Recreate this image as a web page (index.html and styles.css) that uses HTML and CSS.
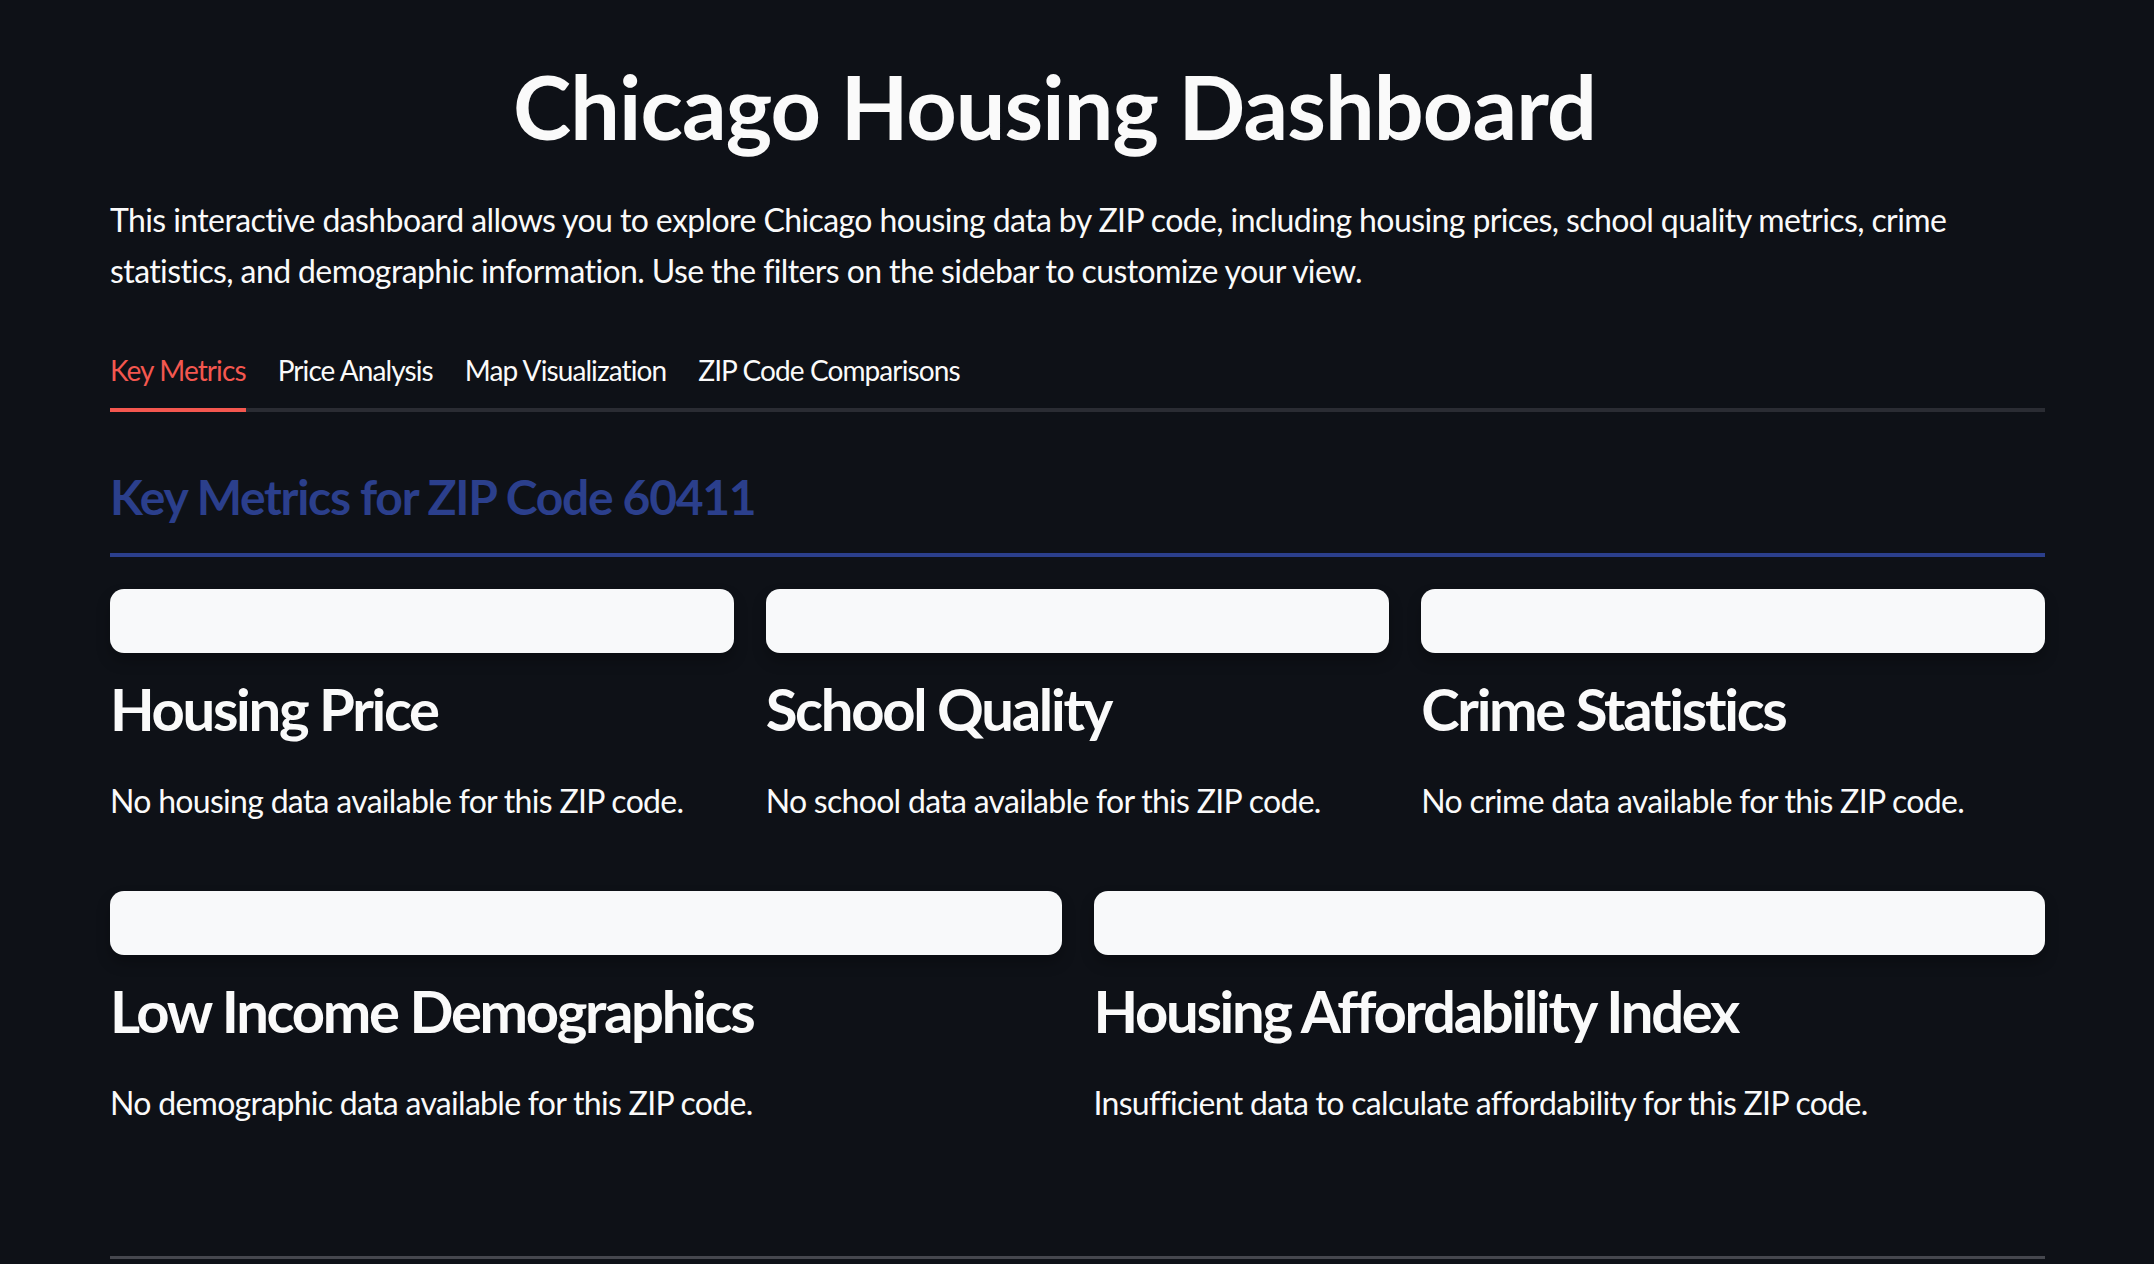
FILE: index.html
```html
<!DOCTYPE html>
<html lang="en">
<head>
<meta charset="utf-8">
<title>Chicago Housing Dashboard</title>
<link rel="stylesheet" href="styles.css">
</head>
<body>
<main class="main">
  <h1 class="title">Chicago Housing Dashboard</h1>
  <p class="intro">This interactive dashboard allows you to explore Chicago housing data by ZIP code, including housing prices, school quality metrics, crime statistics, and demographic information. Use the filters on the sidebar to customize your view.</p>

  <nav class="tabs">
    <div class="tab active">Key Metrics</div>
    <div class="tab">Price Analysis</div>
    <div class="tab">Map Visualization</div>
    <div class="tab">ZIP Code Comparisons</div>
  </nav>

  <h2 class="section-title">Key Metrics for ZIP Code 60411</h2>

  <section class="row row-3">
    <div class="metric">
      <div class="card"></div>
      <h3 class="metric-title">Housing Price</h3>
      <p class="metric-text">No housing data available for this ZIP code.</p>
    </div>
    <div class="metric">
      <div class="card"></div>
      <h3 class="metric-title">School Quality</h3>
      <p class="metric-text">No school data available for this ZIP code.</p>
    </div>
    <div class="metric">
      <div class="card"></div>
      <h3 class="metric-title">Crime Statistics</h3>
      <p class="metric-text">No crime data available for this ZIP code.</p>
    </div>
  </section>

  <section class="row row-2">
    <div class="metric">
      <div class="card"></div>
      <h3 class="metric-title">Low Income Demographics</h3>
      <p class="metric-text">No demographic data available for this ZIP code.</p>
    </div>
    <div class="metric">
      <div class="card"></div>
      <h3 class="metric-title">Housing Affordability Index</h3>
      <p class="metric-text">Insufficient data to calculate affordability for this ZIP code.</p>
    </div>
  </section>

  <hr class="divider">
</main>
</body>
</html>
```

FILE: styles.css
```css
html, body {
  margin: 0;
  padding: 0;
  background: #0e1117;
}

body {
  color: #fafafa;
  font-family: Lato, "Noto Sans", sans-serif;
  height: 1264px;
  overflow: hidden;
}

.main {
  padding: 54px 109px 0 110px;
}

.title {
  margin: 0;
  font-size: 88px;
  line-height: 1.2;
  font-weight: 700;
  letter-spacing: -0.9px;
  text-align: center;
  padding-right: 46px;
}

.intro {
  margin: 34px 0 0;
  font-size: 32px;
  line-height: 51.2px;
  letter-spacing: -0.6px;
}

.tabs {
  display: flex;
  gap: 32px;
  margin-top: 54px;
  border-bottom: 4px solid #2a2c33;
}

.tab {
  position: relative;
  font-size: 28px;
  line-height: 40px;
  padding-bottom: 18px;
  letter-spacing: -0.9px;
  color: #fafafa;
}

.tab.active {
  color: #f4574f;
}

.tab.active::after {
  content: "";
  position: absolute;
  left: 0;
  right: 0;
  bottom: -4px;
  height: 4px;
  background: #f4574f;
}

.section-title {
  margin: 56px 0 0;
  font-size: 48px;
  line-height: 1.2;
  font-weight: 700;
  letter-spacing: -1.3px;
  color: #2b3f8c;
  padding-bottom: 27px;
  border-bottom: 4px solid #2b3f8c;
}

.row {
  display: grid;
  gap: 32px;
}

.row-3 {
  grid-template-columns: repeat(3, 1fr);
  margin-top: 32px;
}

.row-2 {
  grid-template-columns: repeat(2, 1fr);
  margin-top: 64px;
}

.card {
  height: 64px;
  background: #f8f9fa;
  border-radius: 14px;
  box-shadow: 0 8px 14px rgba(0, 0, 0, 0.25);
}

.metric-title {
  margin: 18px 0 0;
  font-size: 58px;
  line-height: 76.8px;
  font-weight: 700;
  letter-spacing: -2.3px;
}

.metric-text {
  margin: 28px 0 0;
  font-size: 32px;
  line-height: 51.2px;
  letter-spacing: -0.7px;
}

.divider {
  margin: 127px 0 0;
  border: 0;
  height: 3px;
  background: #45474e;
}
```
